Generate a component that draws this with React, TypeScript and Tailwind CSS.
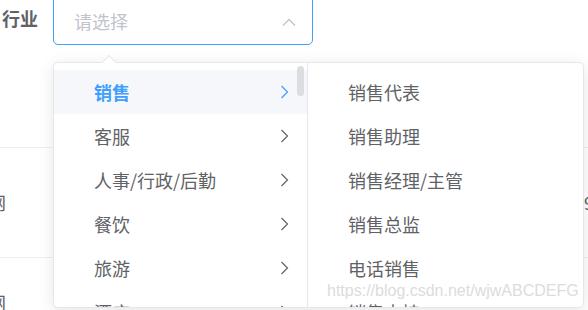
import React from "react";

const industries = ["销售", "客服", "人事/行政/后勤", "餐饮", "旅游", "酒店"];
const jobs = ["销售代表", "销售助理", "销售经理/主管", "销售总监", "电话销售", "销售支持"];

function ChevronRight({ active }: { active?: boolean }) {
  return (
    <svg width="9" height="14" viewBox="0 0 9 14" fill="none">
      <polyline
        points="1.5,1 7.5,7 1.5,13"
        stroke={active ? "#409eff" : "#606266"}
        strokeWidth="1.2"
        strokeLinejoin="miter"
      />
    </svg>
  );
}

function ChevronUp() {
  return (
    <svg width="14" height="8" viewBox="0 0 14 8" fill="none">
      <polyline points="1,7.5 7,1.5 13,7.5" stroke="#c0c4cc" strokeWidth="1.3" />
    </svg>
  );
}

export default function App() {
  return (
    <div
      className="relative w-[588px] h-[310px] overflow-hidden bg-white text-[#606266]"
      style={{ fontFamily: '"Noto Sans CJK SC", "Noto Sans", sans-serif' }}
    >
      {/* form row */}
      <div className="flex items-center h-[53px] -mt-[8px]">
        <span className="w-[53px] pl-[2px] text-[18px] font-bold text-[#606266]">行业</span>
        <div className="w-[260px] h-[53px] flex items-center justify-between border border-[#409eff] rounded-[5px] pl-[20px] pr-[16px] pt-[6px]">
          <span className="text-[18px] text-[#c0c4cc]">请选择</span>
          <ChevronUp />
        </div>
      </div>

      {/* table behind */}
      <div className="mt-[50px] flex flex-col">
        <div className="h-[53px] border-b border-[#ebeef5]" />
        <div className="h-[110px] border-b border-[#ebeef5] flex items-center justify-between text-[18px] text-[#606266]">
          <span className="-ml-[12px]">网</span>
          <span className="-mr-[6px]">9</span>
        </div>
        <div className="h-[56px] flex items-end text-[18px]">
          <span className="-ml-[12px] translate-y-[2px]">网</span>
        </div>
      </div>

      {/* cascader dropdown */}
      <div className="absolute left-[53px] top-[62px] w-[531px] h-[246px] bg-white border border-[#e4e7ed] rounded-[5px] shadow-[0_3px_16px_rgba(0,0,0,0.1)]">
        <div className="absolute left-[50px] -top-[6px] w-[10px] h-[10px] bg-white border-l border-t border-[#e4e7ed] rotate-45" />
        <div className="flex h-full overflow-hidden rounded-[5px]">
          <div className="relative w-[254px] border-r border-[#e4e7ed] pt-[7px]">
            {industries.map((name, i) => (
              <div
                key={name}
                className={
                  "h-[44px] flex items-center justify-between pl-[40px] pr-[18px] text-[18px] " +
                  (i === 0 ? "bg-[#f5f7fa] text-[#409eff] font-bold" : "text-[#606266]")
                }
              >
                <span>{name}</span>
                <ChevronRight active={i === 0} />
              </div>
            ))}
            <div className="absolute right-[3px] top-[3px] w-[7px] h-[30px] rounded-full bg-[#dcdde0]" />
          </div>
          <div className="relative flex-1 pt-[7px]">
            {jobs.map((name) => (
              <div key={name} className="h-[44px] flex items-center pl-[40px] text-[18px] text-[#606266]">
                {name}
              </div>
            ))}
            <span
              className="absolute left-[19px] top-[216px] text-[16px] text-[#dcdcdc] whitespace-nowrap"
              style={{ fontFamily: '"Liberation Sans", Arial, sans-serif' }}
            >
              https://blog.csdn.net/wjwABCDEFG
            </span>
          </div>
        </div>
      </div>
    </div>
  );
}
